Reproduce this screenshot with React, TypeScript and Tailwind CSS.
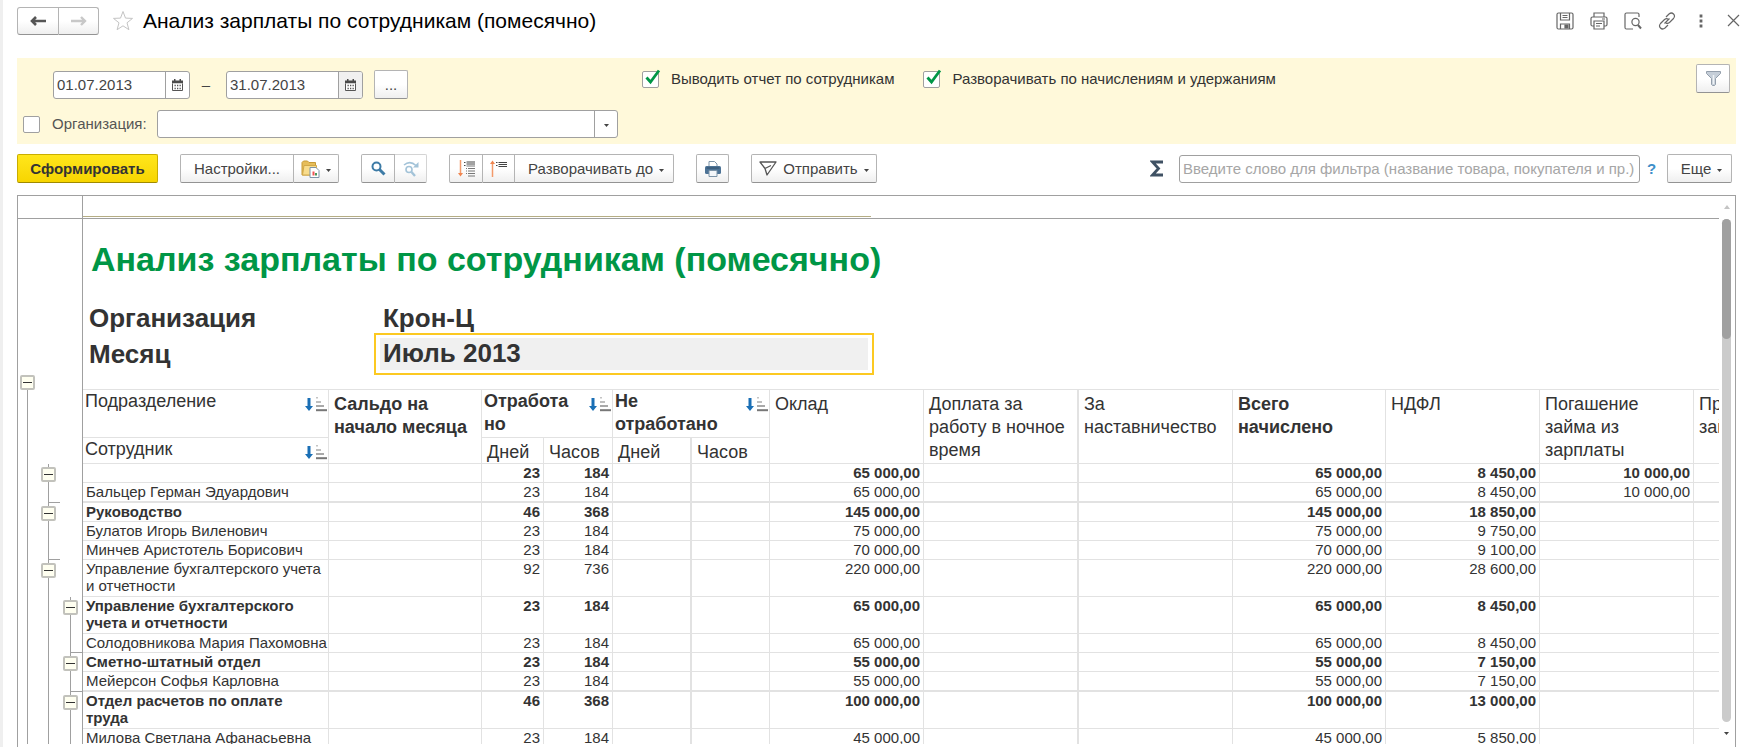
import type { ReactNode } from "react";
import { clsx } from "clsx";

const buttonBase =
  "flex items-center justify-center border border-[#b4b4b4] border-b-[#939393] bg-gradient-to-b from-white from-50% to-[#efefef] text-[#444]";

interface ToolButtonProps {
  label?: string;
  className?: string;
  disabled?: boolean;
  children: ReactNode;
}

function ToolButton({ label, className, disabled, children }: ToolButtonProps) {
  return (
    <button type="button" aria-label={label} disabled={disabled} className={clsx(buttonBase, "h-[29px]", className)}>
      {children}
    </button>
  );
}

function Caret() {
  return (
    <svg width="5" height="6" viewBox="0 0 5 6" className="shrink-0">
      <path d="M0 3h5L2.500 6z" fill="#444" />
    </svg>
  );
}

function CalendarIcon() {
  return (
    <svg width="11" height="12" viewBox="0 0 11 12">
      <path d="M2 0h1.500v1.500h4V0H9v1.500h2V4.500H0v-3h2z" fill="#4a4a4a" />
      <path d="M.5 4.500v7h10v-7" fill="#fff" stroke="#555" />
      <path d="M2.500 6.500h6.500M2.500 9.500h6.500" stroke="#555" strokeWidth="1.500" strokeDasharray="1.300 1.200" />
    </svg>
  );
}

function SortIcon() {
  return (
    <svg width="22" height="15" viewBox="0 0 22 15" className="mt-[7px] mr-px shrink-0">
      <path d="M2.500 1h3v8H8l-4 5-4-5h2.500z" fill="#1a6fb5" />
      <path d="M11 .8h2" stroke="#c4c4c4" strokeWidth="1.500" />
      <path d="M11 5h5" stroke="#aaa" strokeWidth="1.500" />
      <path d="M11 9h8" stroke="#8c8c8c" strokeWidth="1.500" />
      <path d="M11 13.200h11" stroke="#777" strokeWidth="2" />
    </svg>
  );
}

function DateField({ label, value, shaded }: { label: string; value: string; shaded?: boolean }) {
  return (
    <div className="flex h-7 w-[137px] overflow-hidden rounded-[3px] border border-[#a0a0a0] bg-white">
      <input aria-label={label} defaultValue={value} className="min-w-0 flex-1 pl-[3px] text-[#444] outline-none" />
      <button
        type="button"
        aria-label="Выбрать дату"
        className={clsx("flex w-6 items-center justify-center border-l border-[#a0a0a0]", shaded && "bg-[#f0f0f0]")}
      >
        <CalendarIcon />
      </button>
    </div>
  );
}

function CheckField({ label }: { label: string }) {
  return (
    <label className="flex items-center gap-3 text-[#333]">
      <span className="relative h-[17px] w-[17px]">
        <input
          type="checkbox"
          defaultChecked
          className="peer block h-[17px] w-[17px] appearance-none rounded-[2px] border border-[#a0a0a0] bg-white"
        />
        <svg
          width="17"
          height="17"
          viewBox="0 0 17 17"
          className="pointer-events-none absolute -top-0.5 left-0.5 hidden peer-checked:block"
        >
          <path d="M2.500 8.500 6.500 13 15 1.500" fill="none" stroke="#009646" strokeWidth="2.800" />
        </svg>
      </span>
      {label}
    </label>
  );
}

function WindowButton({ label, children }: { label: string; children: ReactNode }) {
  return (
    <button type="button" aria-label={label} className="flex h-7 w-[34px] items-center justify-center last:w-8">
      <svg width="18" height="18" viewBox="0 0 18 18" fill="none" stroke="#666" strokeWidth="1.200">
        {children}
      </svg>
    </button>
  );
}

function TitleBar() {
  return (
    <header className="-mr-3.5 flex items-center pt-[7px]">
      <div className="flex">
        <button type="button" aria-label="Назад" className={clsx(buttonBase, "h-7 w-[42px] rounded-l-[3px]")}>
          <svg width="16" height="12" viewBox="0 0 16 12">
            <path d="M6 2 2 6l4 4M2 6h14" fill="none" stroke="#555" strokeWidth="2.600" />
          </svg>
        </button>
        <button
          type="button"
          aria-label="Вперед"
          disabled
          className={clsx(buttonBase, "h-7 w-10 rounded-r-[3px] border-l-0")}
        >
          <svg width="16" height="12" viewBox="0 0 16 12">
            <path d="m10 2 4 4-4 4M14 6H0" fill="none" stroke="#c8c8c8" strokeWidth="2.400" />
          </svg>
        </button>
      </div>
      <button type="button" aria-label="Добавить в избранное" className="ml-[13px]">
        <svg width="22" height="22" viewBox="0 0 22 22">
          <path
            d="m11 1.500 2.500 6.600 7 .3-5.500 4.400 1.900 6.900L11 15.800l-5.900 3.900L7 12.800 1.500 8.400l7-.3z"
            fill="none"
            stroke="#c4c4c4"
          />
        </svg>
      </button>
      <h1 className="ml-[9px] text-[21px] leading-6 text-black">Анализ зарплаты по сотрудникам (помесячно)</h1>
      <div className="ml-auto flex">
        <WindowButton label="Сохранить">
          <path d="M1 2.500Q1 1 2.500 1h13Q17 1 17 2.500v13q0 1.500-1.500 1.500h-13Q1 17 1 15.500z" />
          <path d="M4.500 1v7h9V1M6.500 3.500h5M6.500 5.500h5M4.500 17v-5h9v5" />
          <path d="M9 13h3v3H9z" fill="#666" />
        </WindowButton>
        <WindowButton label="Печать">
          <path d="M4 5V1h10v4M4 14H2.500Q1 14 1 12.500v-6Q1 5 2.500 5h13Q17 5 17 6.500v6q0 1.500-1.500 1.500H14M4 9h10v8H4zM6 11.500h6M6 14h4M12 7h3" />
        </WindowButton>
        <WindowButton label="Предварительный просмотр">
          <path d="M9 17H2.500Q1 17 1 15.500v-13Q1 1 2.500 1h11Q15 1 15 2.500V5" />
          <circle cx="11.500" cy="10" r="3.600" />
          <path d="m14 13 3 3.500" strokeWidth="2" />
        </WindowButton>
        <WindowButton label="Получить ссылку">
          <path d="m8 5 3-3q2.500-2 4.500 0t0 4.500l-4 4Q9.500 12 8 11M10 13l-3 3q-2.500 2-4.500 0t0-4.500l4-4Q8.500 6 10 7M6.500 11.500l5-5" />
        </WindowButton>
        <WindowButton label="Еще">
          <path d="M9 2.500v3M9 7.500v3M9 12.500v3" strokeWidth="2.800" />
        </WindowButton>
        <WindowButton label="Закрыть">
          <path d="m3 3 11 11M14 3 3 14" />
        </WindowButton>
      </div>
    </header>
  );
}

function FilterPanel() {
  return (
    <section className="mt-[23px] flex bg-[#fff9da] pb-1.5">
      <div className="w-[601px] shrink-0 pt-3">
        <div className="flex h-[29px] items-center pl-9">
          <DateField label="Начало периода" value="01.07.2013" />
          <span className="w-9 pr-1 text-center text-[#444]">–</span>
          <DateField label="Конец периода" value="31.07.2013" shaded />
          <ToolButton label="Выбрать период" className="ml-[11px] w-[34px] rounded-[2px]">
            ...
          </ToolButton>
        </div>
        <div className="mt-[11px] flex items-center pl-1.5">
          <input
            type="checkbox"
            aria-label="Отбор по организации"
            className="h-[17px] w-[17px] appearance-none rounded-[2px] border border-[#a0a0a0] bg-white"
          />
          <label htmlFor="organization" className="ml-3 w-[105px] text-[#555]">
            Организация:
          </label>
          <div className="flex h-7 flex-1 rounded-[3px] border border-[#a0a0a0] bg-white">
            <input id="organization" className="min-w-0 flex-1 px-1 outline-none" />
            <button
              type="button"
              aria-label="Выбрать из списка"
              className="flex w-[23px] items-center justify-center border-l border-[#a0a0a0]"
            >
              <Caret />
            </button>
          </div>
        </div>
      </div>
      <div className="ml-6 flex items-start gap-[29px] pt-3">
        <CheckField label="Выводить отчет по сотрудникам" />
        <CheckField label="Разворачивать по начислениям и удержаниям" />
      </div>
      <ToolButton label="Настройка отбора" className="mt-1.5 mr-1.5 ml-auto w-[34px] rounded-[2px]">
        <svg width="15" height="15" viewBox="0 0 15 15">
          <path d="M.5.5h14v2L9.500 7.500v6l-1 1h-2l-1-1v-6L.5 2.500z" fill="#c5ced8" stroke="#939eab" />
          <path d="M7.500 4v9" stroke="#eef2f6" strokeWidth="1.500" />
        </svg>
      </ToolButton>
    </section>
  );
}

function Toolbar() {
  return (
    <div className="mt-2.5 flex items-center gap-[22px]">
      <button
        type="button"
        className="h-[29px] w-[141px] rounded-[2px] border border-[#c9ad00] border-b-[#a08a00] bg-gradient-to-b from-[#ffe61a] to-[#f7d500] font-bold text-[#333]"
      >
        Сформировать
      </button>
      <div className="flex">
        <ToolButton className="w-[114px] rounded-l-[2px]">Настройки...</ToolButton>
        <ToolButton label="Варианты отчета" className="w-[45px] gap-1.5 rounded-r-[2px] border-l-0">
          <svg width="19" height="18" viewBox="0 0 19 18">
            <path d="M1 2.500 2.500 1h4L8 2.500h6.500V15H1z" fill="#e6bd5a" stroke="#c79a35" />
            <path d="M3 5.500h12.500V15H1.500z" fill="#f8dc8c" stroke="#d2a847" />
            <path d="M9 7.500h6l3 3v7H9z" fill="#fff" stroke="#7d94a8" />
            <path d="M11.500 15.500v-4h2v4z" fill="#e55" />
            <path d="M14 15.500v-2.500h2v2.500z" fill="#4a9a5a" />
          </svg>
          <Caret />
        </ToolButton>
      </div>
      <div className="flex">
        <ToolButton label="Найти" className="w-[34px] rounded-l-[2px]">
          <svg width="15" height="15" viewBox="0 0 15 15" fill="none" stroke="#3d7ba6">
            <circle cx="5.500" cy="5.500" r="4" strokeWidth="2" />
            <path d="m8.500 8.500 5 5" strokeWidth="3" />
          </svg>
        </ToolButton>
        <ToolButton label="Найти далее" disabled className="w-8 rounded-r-[2px] border-l-0 border-[#d4d4d4]">
          <svg width="16" height="16" viewBox="0 0 16 16" fill="none" stroke="#a3c3d8">
            <circle cx="6" cy="8.500" r="3" strokeWidth="1.600" />
            <path d="m8.500 11 3.500 4" strokeWidth="2.400" />
            <path d="M1 4q6-5 12 .5" strokeWidth="1.600" />
            <path d="M15.500 1v5.500H10z" fill="#a3c3d8" stroke="none" />
          </svg>
        </ToolButton>
      </div>
      <div className="flex">
        <ToolButton label="Развернуть группы" className="w-[34px] rounded-l-[2px]">
          <svg width="17" height="17" viewBox="0 0 17 17" fill="none">
            <path d="M2.500 0v14" stroke="#f39a6b" strokeWidth="1.500" />
            <path d="M0 13h5l-2.500 3.500z" fill="#f0854f" />
            <path d="M6 2.500h1.500M6 5.500h1.500" stroke="#444" />
            <path d="M8.500 2h8.500M8.500 4h8.500" stroke="#444" />
            <path d="M8.500 6h8.500M10 8.500h7M10 11h7M10 13.500h7M10 16h7M8 8.500h1M8 11h1M8 13.500h1" stroke="#777" />
          </svg>
        </ToolButton>
        <ToolButton label="Свернуть группы" className="w-8 border-l-0">
          <svg width="17" height="17" viewBox="0 0 17 17" fill="none">
            <path d="M2.500 17V3" stroke="#f39a6b" strokeWidth="1.500" />
            <path d="M0 4h5L2.500.5z" fill="#f0854f" />
            <path d="M6 2.500h1.500M6 5.500h1.500" stroke="#444" />
            <path d="M8.500 2.500h8.500M8.500 4.500h8.500M8.500 6.500h8.500" stroke="#444" />
          </svg>
        </ToolButton>
        <ToolButton className="w-[159px] gap-1.5 rounded-r-[2px] border-l-0 pl-1">
          Разворачивать до
          <Caret />
        </ToolButton>
      </div>
      <ToolButton label="Печать" className="w-[33px] rounded-[2px]">
        <svg width="16" height="16" viewBox="0 0 16 16">
          <path d="M4 6V.5h5.500L12 3v3" fill="#fff" stroke="#7d94a8" />
          <rect y="5" width="16" height="8" rx="1.500" fill="#4d7396" />
          <path d="M1.500 7h13" stroke="#2f4e6b" />
          <path d="M4 9.500h8v6H4z" fill="#f4f7fa" stroke="#7d94a8" />
        </svg>
      </ToolButton>
      <ToolButton className="w-[126px] gap-1.5 rounded-[2px]">
        <svg width="18" height="15" viewBox="0 0 18 15" fill="none" stroke="#555" strokeWidth="1.300">
          <path d="M1 1h16L8 14 6 7.500zM6 7.500 12 4.500" strokeLinejoin="round" />
        </svg>
        Отправить
        <Caret />
      </ToolButton>
      <div className="mr-1 ml-auto flex items-center">
        <button type="button" aria-label="Сумма">
          <svg width="14" height="17" viewBox="0 0 14 17">
            <path d="M13 2H2.500L8.500 8.500l-6 6.500H13" fill="none" stroke="#3f5163" strokeWidth="2.800" />
          </svg>
        </button>
        <input
          aria-label="Фильтр"
          placeholder="Введите слово для фильтра (название товара, покупателя и пр.)"
          className="ml-[15px] h-7 w-[461px] rounded-[3px] border border-[#a0a0a0] bg-white px-[3px] outline-none placeholder:text-[#a6a6a6]"
        />
        <button type="button" className="w-[27px] pr-1 font-bold text-[#3d8fc9]">
          ?
        </button>
        <ToolButton className="w-[65px] gap-1.5 rounded-[2px] pl-1">
          Еще
          <Caret />
        </ToolButton>
      </div>
    </div>
  );
}

// lane state of one outline level in a row
type Lane = "none" | "open" | "line" | "end";

interface ReportRow {
  name: string;
  lanes: [Lane, Lane];
  bold?: boolean;
  tall?: boolean;
  thick?: boolean;
  days: string;
  hours: string;
  salary: string;
  tax: string;
  loan?: string;
}

const rows: ReportRow[] = [
  { name: "", lanes: ["open", "none"], bold: true, days: "23", hours: "184", salary: "65 000,00", tax: "8 450,00", loan: "10 000,00" },
  { name: "Бальцер Герман Эдуардович", lanes: ["end", "none"], thick: true, days: "23", hours: "184", salary: "65 000,00", tax: "8 450,00", loan: "10 000,00" },
  { name: "Руководство", lanes: ["open", "none"], bold: true, days: "46", hours: "368", salary: "145 000,00", tax: "18 850,00" },
  { name: "Булатов Игорь Виленович", lanes: ["line", "none"], days: "23", hours: "184", salary: "75 000,00", tax: "9 750,00" },
  { name: "Минчев Аристотель Борисович", lanes: ["end", "none"], days: "23", hours: "184", salary: "70 000,00", tax: "9 100,00" },
  { name: "Управление бухгалтерского учета и отчетности", lanes: ["open", "none"], tall: true, days: "92", hours: "736", salary: "220 000,00", tax: "28 600,00" },
  { name: "Управление бухгалтерского учета и отчетности", lanes: ["line", "open"], bold: true, tall: true, days: "23", hours: "184", salary: "65 000,00", tax: "8 450,00" },
  { name: "Солодовникова Мария Пахомовна", lanes: ["line", "end"], days: "23", hours: "184", salary: "65 000,00", tax: "8 450,00" },
  { name: "Сметно-штатный отдел", lanes: ["line", "open"], bold: true, days: "23", hours: "184", salary: "55 000,00", tax: "7 150,00" },
  { name: "Мейерсон Софья Карловна", lanes: ["line", "end"], thick: true, days: "23", hours: "184", salary: "55 000,00", tax: "7 150,00" },
  { name: "Отдел расчетов по оплате труда", lanes: ["line", "open"], bold: true, tall: true, days: "46", hours: "368", salary: "100 000,00", tax: "13 000,00" },
  { name: "Милова Светлана Афанасьевна", lanes: ["line", "line"], days: "23", hours: "184", salary: "45 000,00", tax: "5 850,00" },
];

function CollapseButton() {
  return (
    <button
      type="button"
      aria-label="Свернуть группу"
      className="-ml-2 flex h-[15px] w-[15px] items-center justify-center rounded-[2px] border-2 border-[#c2c2bc] bg-[#fffff0]"
    >
      <span className="h-px w-[9px] bg-[#333]" />
    </button>
  );
}

function LaneCell({ lane, className }: { lane: Lane; className?: string }) {
  return (
    <td
      className={clsx(
        "border-l p-0",
        lane === "none" ? "border-l-transparent" : "border-l-[#a0a0a0]",
        lane === "open" && "pt-[3px] align-top",
        lane === "end" && "align-bottom",
        className,
      )}
    >
      {lane === "open" && <CollapseButton />}
      {lane === "end" && <div className="h-px w-[11px] bg-[#a0a0a0]" />}
    </td>
  );
}

const gutterEdge = "border-r border-r-[#a0a0a0]";
const headCell = "border-r border-b border-[#e2e2e2] text-left align-top";
const tallHead = clsx(headCell, "pt-[3px] pl-[5px]");
const subHead = clsx(headCell, "pt-[3px] pl-[5px] leading-[22px]");

function ReportTable() {
  return (
    <table className="w-[1830px] table-fixed border-separate border-spacing-0 text-[#333]">
      <colgroup>
        <col className="w-[9px]" />
        <col className="w-[21px]" />
        <col className="w-[22px]" />
        <col className="w-[13px]" />
        <col className="w-[246px]" />
        <col className="w-[153px]" />
        <col className="w-[62px]" />
        <col className="w-[69px]" />
        <col className="w-[79px]" />
        <col className="w-[78px]" />
        <col className="w-[154px]" />
        <col className="w-[155px]" />
        <col className="w-[154px]" />
        <col className="w-[153px]" />
        <col className="w-[154px]" />
        <col className="w-[154px]" />
        <col className="w-[154px]" />
      </colgroup>
      <thead className="text-[18px] leading-[23px] [&_th]:font-normal">
        <tr className="h-[15px]">
          <td />
          <td className="p-0 align-top">
            <div className="pl-px">
              <CollapseButton />
            </div>
          </td>
          <td />
          <td className={gutterEdge} />
          <td colSpan={13} className="border-b border-[#e2e2e2] p-0" />
        </tr>
        <tr className="h-12">
          <td />
          <td className="border-l border-[#a0a0a0]" />
          <td />
          <td className={gutterEdge} />
          <th className={headCell}>
            <div className="flex items-start justify-between pl-0.5">
              Подразделение
              <SortIcon />
            </div>
          </th>
          <th rowSpan={2} className={tallHead}>
            <b>Сальдо на начало месяца</b>
          </th>
          <th colSpan={2} className={headCell}>
            <div className="flex items-start justify-between pl-0.5">
              <b>
                Отработа
                <br />
                но
              </b>
              <SortIcon />
            </div>
          </th>
          <th colSpan={2} className={headCell}>
            <div className="flex items-start justify-between pl-0.5">
              <b>
                Не
                <br />
                отработано
              </b>
              <SortIcon />
            </div>
          </th>
          <th rowSpan={2} className={tallHead}>
            Оклад
          </th>
          <th rowSpan={2} className={clsx(tallHead, "border-r-2")}>
            Доплата за работу в ночное время
          </th>
          <th rowSpan={2} className={tallHead}>
            За наставничество
          </th>
          <th rowSpan={2} className={tallHead}>
            <b>
              Всего
              <br />
              начислено
            </b>
          </th>
          <th rowSpan={2} className={tallHead}>
            НДФЛ
          </th>
          <th rowSpan={2} className={tallHead}>
            Погашение займа из зарплаты
          </th>
          <th rowSpan={2} className={tallHead}>
            Прочие
            <br />
            займы
          </th>
        </tr>
        <tr className="h-[26px]">
          <td />
          <td className="border-l border-[#a0a0a0]" />
          <td />
          <td className={gutterEdge} />
          <th className={headCell}>
            <div className="flex items-start justify-between pl-0.5">
              Сотрудник
              <SortIcon />
            </div>
          </th>
          <th className={subHead}>Дней</th>
          <th className={subHead}>Часов</th>
          <th className={clsx(subHead, "border-r-2")}>Дней</th>
          <th className={subHead}>Часов</th>
        </tr>
      </thead>
      <tbody className="text-[15px] leading-[17px]">
        {rows.map((row, index) => {
          const cell = clsx(
            "border-r border-[#e2e2e2] py-0 align-top",
            row.thick ? "border-b-2" : "border-b",
            row.bold && "font-bold",
          );
          const numeric = clsx(cell, "pr-[3px] text-right whitespace-nowrap");
          return (
            <tr key={index} className={row.tall ? "h-[37px]" : row.thick ? "h-5" : "h-[19px]"}>
              <td />
              <td className="border-l border-[#a0a0a0]" />
              <LaneCell lane={row.lanes[0]} />
              <LaneCell lane={row.lanes[1]} className={gutterEdge} />
              <td className={clsx(cell, "pl-[3px]")}>{row.name}</td>
              <td className={cell} />
              <td className={numeric}>{row.days}</td>
              <td className={numeric}>{row.hours}</td>
              <td className={clsx(cell, "border-r-2")} />
              <td className={cell} />
              <td className={numeric}>{row.salary}</td>
              <td className={clsx(cell, "border-r-2")} />
              <td className={cell} />
              <td className={numeric}>{row.salary}</td>
              <td className={numeric}>{row.tax}</td>
              <td className={numeric}>{row.loan}</td>
              <td className={cell} />
            </tr>
          );
        })}
      </tbody>
    </table>
  );
}

function ReportHeading() {
  return (
    <div className="flex">
      <div className="w-[65px] shrink-0 border-r border-[#a0a0a0]" />
      <div className="pt-5 text-[26px] font-bold text-[#333]">
        <h2 className="pl-2 text-[34px] leading-10 whitespace-nowrap text-[#009646]">
          Анализ зарплаты по сотрудникам (помесячно)
        </h2>
        <div className="mt-5 flex pt-1 leading-[30px]">
          <div className="w-[291px] pl-1.5">Организация</div>
          <div className="pl-[9px]">Крон-Ц</div>
        </div>
        <div className="flex items-center">
          <div className="w-[291px] pl-1.5 leading-[30px]">Месяц</div>
          <div className="w-[500px] border-2 border-[#fcc921] px-1 py-[3px]">
            <div className="bg-[#f0f0f0] pb-0.5 pl-[3px] leading-[30px]">Июль 2013</div>
          </div>
        </div>
      </div>
    </div>
  );
}

function Scrollbar() {
  return (
    <div className="flex w-4 shrink-0 flex-col items-center pt-[9px] pr-px pb-3">
      <svg width="6" height="4" viewBox="0 0 6 4">
        <path d="M0 4h6L3 0z" fill="#c4c4c4" />
      </svg>
      <div className="mt-2.5 mb-[7px] w-[9px] flex-1 rounded-full bg-[#cbcbcb]">
        <div className="h-[120px] rounded-full bg-[#a0a0a0]" />
      </div>
      <Caret />
    </div>
  );
}

function Sheet() {
  return (
    <main className="mt-3 flex min-h-0 flex-1 border border-b-0 border-[#a0a0a0]">
      <div className="mb-[3px] min-w-0 flex-1 overflow-hidden">
        <div className="flex h-[23px] border-b border-[#a0a0a0]">
          <div className="w-[65px] shrink-0 border-r border-[#a0a0a0]" />
          <div className="mb-px w-[788px] border-b border-[#b5ad84]" />
        </div>
        <ReportHeading />
        <ReportTable />
      </div>
      <Scrollbar />
    </main>
  );
}

export default function App() {
  return (
    <div className="flex h-screen flex-col overflow-hidden border-l-3 border-[#efefef] bg-white px-3.5 font-['Liberation_Sans',Arial,sans-serif] text-[15px] leading-[18px]">
      <TitleBar />
      <FilterPanel />
      <Toolbar />
      <Sheet />
    </div>
  );
}
